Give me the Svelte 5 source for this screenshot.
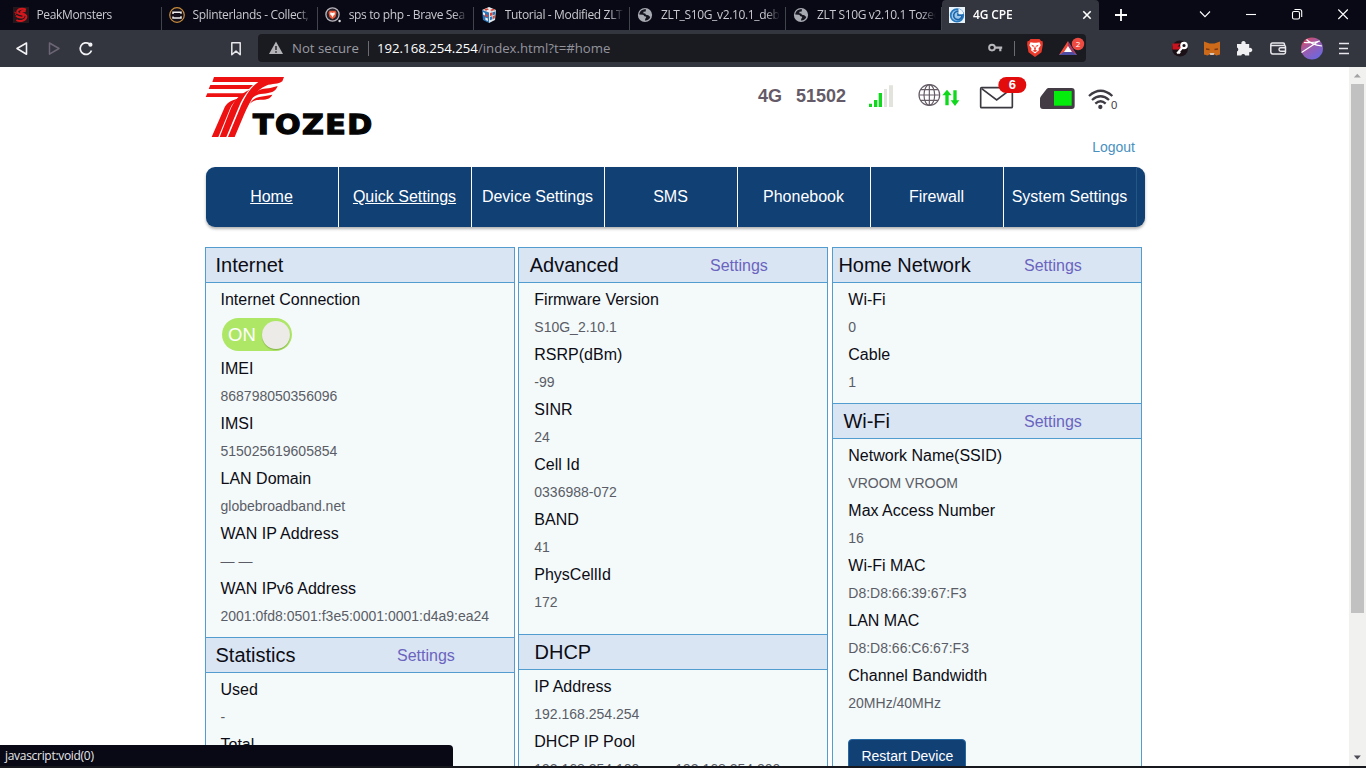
<script lang="ts">
  interface Tab {
    title: string;
    icon: string;
    active?: boolean;
  }

  interface Item {
    label: string;
    value?: string;
    toggle?: boolean;
  }

  interface Panel {
    title: string;
    indent: number;
    settings?: boolean;
    bottom: number;
    items: Item[];
    restart?: boolean;
  }

  const tabs: Tab[] = [
    { title: 'PeakMonsters', icon: 'peak' },
    { title: 'Splinterlands - Collect,', icon: 'splinter' },
    { title: 'sps to php - Brave Sea', icon: 'search' },
    { title: 'Tutorial - Modified ZLT', icon: 'cube' },
    { title: 'ZLT_S10G_v2.10.1_deb', icon: 'world' },
    { title: 'ZLT S10G v2.10.1 Tozed', icon: 'world' },
    { title: '4G CPE', icon: 'cpe', active: true }
  ];

  const nav = ['Home', 'Quick Settings', 'Device Settings', 'SMS', 'Phonebook', 'Firewall', 'System Settings'];

  const columns: Panel[][] = [
    [
      {
        title: 'Internet', indent: 9.5, bottom: 7,
        items: [
          { label: 'Internet Connection', toggle: true },
          { label: 'IMEI', value: '868798050356096' },
          { label: 'IMSI', value: '515025619605854' },
          { label: 'LAN Domain', value: 'globebroadband.net' },
          { label: 'WAN IP Address', value: '— —' },
          { label: 'WAN IPv6 Address', value: '2001:0fd8:0501:f3e5:0001:0001:d4a9:ea24' }
        ]
      },
      {
        title: 'Statistics', indent: 9.5, settings: true, bottom: 8,
        items: [
          { label: 'Used', value: '-' },
          { label: 'Total', value: '-' }
        ]
      }
    ],
    [
      {
        title: 'Advanced', indent: 10.7, settings: true, bottom: 18,
        items: [
          { label: 'Firmware Version', value: 'S10G_2.10.1' },
          { label: 'RSRP(dBm)', value: '-99' },
          { label: 'SINR', value: '24' },
          { label: 'Cell Id', value: '0336988-072' },
          { label: 'BAND', value: '41' },
          { label: 'PhysCellId', value: '172' }
        ]
      },
      {
        title: 'DHCP', indent: 15.5, bottom: 8,
        items: [
          { label: 'IP Address', value: '192.168.254.254' },
          { label: 'DHCP IP Pool', value: '192.168.254.100 —— 192.168.254.200' }
        ]
      }
    ],
    [
      {
        title: 'Home Network', indent: 5.4, settings: true, bottom: 7,
        items: [
          { label: 'Wi-Fi', value: '0' },
          { label: 'Cable', value: '1' }
        ]
      },
      {
        title: 'Wi-Fi', indent: 10.4, settings: true, bottom: 8, restart: true,
        items: [
          { label: 'Network Name(SSID)', value: 'VROOM VROOM' },
          { label: 'Max Access Number', value: '16' },
          { label: 'Wi-Fi MAC', value: 'D8:D8:66:39:67:F3' },
          { label: 'LAN MAC', value: 'D8:D8:66:C6:67:F3' },
          { label: 'Channel Bandwidth', value: '20MHz/40MHz' }
        ]
      }
    ]
  ];
</script>

{#snippet favicon(name: string)}
  <svg class="favicon" viewBox="0 0 16 16" width="16" height="16">
    {#if name === 'peak'}
      <rect width="16" height="16" fill="#25171c" />
      <path d="M13 2.6C9 .8 4.5 2 4.2 5c-.2 2.4 6.8 2 6.5 4.2C10.4 11.6 5 10.5 3 8.6M3.4 13c3.5 2.2 9.3.7 10-3 .4-3-4.8-3.2-5.4-4.8C7.7 4 10.5 3.6 12.6 4.5" fill="none" stroke="#d3181d" stroke-width="1.9" />
      <path d="M1 5l3 1-2 1 2 2" fill="none" stroke="#a81519" />
    {:else if name === 'splinter'}
      <circle cx="8" cy="8" r="7.3" fill="#11101a" stroke="#c98c3c" stroke-width="1.2" />
      <path d="M4 7V5.2h8v1.5M12 9.3V11H4V9.5" fill="none" stroke="#eee" stroke-width="1.5" />
    {:else if name === 'search'}
      <circle cx="7.5" cy="7.5" r="6.6" fill="#26222b" stroke="#b9b5bd" stroke-width="1.3" />
      <path d="M4.5 3.7h6l1 2-1 4.2-3 2.3-3-2.3-1-4.2z" fill="#e8583a" />
      <path d="M5.5 5.2l2 .7 2-.7.4 2-1.4 1.2-1 2-1-2-1.4-1.2z" fill="#fff" />
      <circle cx="14.6" cy="14" r="1.2" fill="#ddd" />
    {:else if name === 'cube'}
      <path d="M1 3l7 2v11l-6-3z" fill="#2c76b8" />
      <path d="M8 5l7-2-1 10-6 3z" fill="#dfe6ec" />
      <path d="M1 3l7-3 7 3-7 2.4z" fill="#eceff2" />
      <path d="M3 2.8l3-1.5 2 1-3 1.5zM9 3l3-1.2 2 1-3.2 1.2zM9 6l2.6-.8v3L9 9zM12 9l2-.8-.3 3-1.9.8zM4 7l2.5 1v2.3L4 9.4z" fill="#d94235" />
      <path d="M11.7 5.2l2.6-.8-.2 3-2.4.8zM9 10l2.4-.8v3L9 13.3z" fill="#2c76b8" />
      <path d="M2 5l2 1v2.5L2 7.6zM4.3 10.5l2.6 1v2.4l-2.4-1z" fill="#eef4f8" />
    {:else if name === 'world'}
      <circle cx="8" cy="8" r="7.1" fill="#a9abb3" />
      <path d="M9 2.2C5 2 2.5 4.3 2.2 7.5l3.4.2c1.8 0 1 1.8 2.8 1.9 1.3.1.8 1.5 0 1.8l-.5 2c2.4.3 4.6-1.2 5.4-3.4l-2-1.8-2.4-.4-.7-1.3-1.9-.3.2-1.4 2.2-.2.1-1.1z" fill="#15151f" />
    {:else}
      <rect width="16" height="16" fill="#e8f2fa" />
      <circle cx="8" cy="8.4" r="6.3" fill="#9cc6e8" stroke="#2678bc" stroke-width="1.7" />
      <path d="M12.6 5.5C10 3 5.5 4 4.7 7.7c-.6 3.5 2.5 5.7 5.5 4.7 2-.7 3-2.5 2.8-4.2H9V5.5" fill="none" stroke="#1c65aa" stroke-width="1.6" />
      <path d="M9.5 1.8a6.4 6.4 0 0 1 5 5.2h-5z" fill="#eef7ff" />
    {/if}
  </svg>
{/snippet}

<div class="browser">
  <header class="tabstrip">
    {#each tabs as tab}
      <div class="tab" class:active={tab.active}>
        {@render favicon(tab.icon)}
        <span class="tab-title">{tab.title}</span>
        {#if tab.active}
          <svg class="tab-close" viewBox="0 0 10 10" width="10" height="10"><path d="M1.3 1.3l7.4 7.4M8.7 1.3L1.3 8.7" stroke="#fff" stroke-width="1.6" /></svg>
        {/if}
      </div>
    {/each}
    <svg class="new-tab" viewBox="0 0 44 30" width="44" height="30"><path d="M22 9v12M16 15h12" stroke="#fff" stroke-width="1.8" /></svg>
    <div class="window-controls">
      <svg viewBox="0 0 46 30"><path d="M18 11.5l5 5.2 5-5.2" /></svg>
      <svg viewBox="0 0 46 30"><path d="M18 14.5h10" /></svg>
      <svg viewBox="0 0 46 30"><rect x="18.5" y="11.5" width="7" height="7.5" rx="1.5" /><path d="M20.5 9.5h5.2a2 2 0 0 1 2 2V17" /></svg>
      <svg viewBox="0 0 46 30"><path d="M18.3 9.5l9.5 9.5M27.8 9.5l-9.5 9.5" /></svg>
    </div>
  </header>

  <div class="toolbar">
    <svg class="tool" viewBox="0 0 32 32"><path d="M20.5 10v11.2L11 15.5z" fill="none" stroke="#f2f2f4" stroke-width="1.6" stroke-linejoin="round" /></svg>
    <svg class="tool" viewBox="0 0 32 32"><path d="M11.5 10v11.2L21 15.5z" fill="none" stroke="#6c6674" stroke-width="1.5" stroke-linejoin="round" /></svg>
    <svg class="tool" viewBox="0 0 32 32"><path d="M19.5 11A5.8 5.8 0 1 0 21.5 17.5" fill="none" stroke="#f2f2f4" stroke-width="1.7" /><circle cx="20.4" cy="11.7" r="2.1" fill="#f2f2f4" /></svg>
    <svg class="tool bookmark" viewBox="0 0 32 32"><path d="M11.8 9.7h8.4v12L16 18.1l-4.2 3.6z" fill="none" stroke="#e8e8ec" stroke-width="1.5" stroke-linejoin="round" /></svg>

    <div class="address">
      <svg width="16" height="16" viewBox="0 0 16 16"><path d="M8 1.5L15 14H1z" fill="#b4b4b8" /><path d="M8 6v4M8 11.2v1.5" stroke="#25262c" stroke-width="1.5" /></svg>
      <span class="insecure">Not secure</span>
      <span class="divider"></span>
      <span class="url">192.168.254.254<span>/index.html?t=#home</span></span>
      <div class="address-icons">
        <svg width="16" height="16" viewBox="0 0 16 16"><circle cx="4" cy="7.6" r="2.9" fill="none" stroke="#b8b8bc" stroke-width="1.9" /><path d="M6.8 7.6h7.4M12.3 7.6v3.6" fill="none" stroke="#b8b8bc" stroke-width="2.2" /></svg>
        <span class="divider"></span>
        <svg width="18" height="20" viewBox="0 0 18 20">
          <path d="M4.5 1h9L15 3l1.6.2.3 3-1.4 8L9 19l-6.5-4.8-1.4-8 .3-3L3 3z" fill="#ea3a2b" />
          <path d="M4.5 4.2l3 .6h3l3-.6 1.2 3-2.3 3.6.6 1.4L9 15.6 5 12.2l.6-1.4-2.3-3.6z" fill="#fff" />
          <path d="M5.2 6.8l2.6.8-.4 1.8zM12.8 6.8l-2.6.8.4 1.8zM9 7.6l1 3.4-1 1.6L8 11zM6.5 12.7l2.5-1 2.5 1L9 14z" fill="#ea3a2b" />
        </svg>
        <svg class="rewards" width="28" height="22" viewBox="0 0 28 22">
          <path d="M10 5.2L1.5 18h17z" fill="#fff" />
          <path d="M10 4L1 18l4.5-2.2L10 9z" fill="#ef4a38" />
          <path d="M10 4l9 14-4.5-2.2L10 9z" fill="#a43961" />
          <path d="M1 18l4.5-3h9L19 18z" fill="#4c4ca2" />
          <circle cx="20" cy="7" r="6.2" fill="#ed4b41" />
          <text x="20" y="10" text-anchor="middle" fill="#fff" font-size="8">2</text>
        </svg>
      </div>
    </div>

    <div class="extensions">
      <svg class="tool" viewBox="0 0 32 32">
        <circle cx="16" cy="15.5" r="8" fill="#1b1016" />
        <path d="M8.5 10.5h8l-3 3h5l-3 3H8.5z" fill="#c9141f" />
        <circle cx="20" cy="12.5" r="2.7" fill="none" stroke="#fff" stroke-width="2.2" />
        <path d="M18.2 14.7l-5 5.8M14.6 18.8l1.5 1.4" stroke="#fff" stroke-width="2.2" />
      </svg>
      <svg class="tool" viewBox="0 0 32 32">
        <path d="M8 8.5l5.5 2h5L24 8.5v13l-3.5 1-2-1h-5l-2 1L8 21.5z" fill="#cd6a19" />
        <path d="M10 16l3.5.5M22 16l-3.5.5" stroke="#7c3914" stroke-width="1.3" />
        <path d="M13.5 20h5l-.8 2h-3.4z" fill="#d9c6ba" />
      </svg>
      <svg class="tool" viewBox="0 0 32 32"><path d="M9 11h4.5a2.2 2.2 0 1 1 4 0h3.7v4a2.2 2.2 0 1 1 0 4v3.4h-4a2.2 2.2 0 0 0-4 0H9v-4a2.2 2.2 0 0 0 0-4z" fill="#f0f0f2" /></svg>
      <svg class="tool wide" viewBox="0 0 34 32"><path d="M24.5 12.5v-1.2c0-.8-.5-1.3-1.3-1.3H12.5c-1.1 0-1.7.7-1.7 1.7V19c0 1.2.7 1.9 1.9 1.9h11.2c1 0 1.6-.6 1.6-1.6v-5.5c0-.8-.5-1.3-1.3-1.3H11.5" fill="none" stroke="#e8e8ec" stroke-width="1.5" /><path d="M25.5 14.8h-4.8a1.7 1.7 0 0 0 0 3.4h4.8" fill="none" stroke="#e8e8ec" stroke-width="1.4" /></svg>
      <svg class="tool wide" viewBox="0 0 34 32">
        <defs>
          <linearGradient id="avatar" x1="0" y1="0" x2=".7" y2="1">
            <stop offset="0" stop-color="#e8474b" />
            <stop offset=".45" stop-color="#a05aa8" />
            <stop offset="1" stop-color="#6b68e0" />
          </linearGradient>
        </defs>
        <circle cx="18" cy="15.5" r="11" fill="url(#avatar)" />
        <path d="M7.5 19.5L25 8M12.5 6.5c3 3.5 7 5.5 15.5 6.5M10 9.5c6 .5 10 .5 16-1.5" fill="none" stroke="#fff" stroke-width="1.2" />
      </svg>
      <svg class="tool" viewBox="0 0 32 32"><path d="M11 10.5h10M11 15.5h9M11 20.5h10" stroke="#e8e8ec" stroke-width="1.5" /></svg>
    </div>
  </div>

  <div class="viewport">
    <main class="page">
      <div class="top">
        <svg class="logo" viewBox="30 0 540 216" width="180" height="72">
          <g fill="#ee1111">
            <path d="M57 27H267L262 40C250 50 232 46 213 53C180 66 163 105 147 140L119 207H99L133 125C150 85 165 60 190 42H52z" />
            <path d="M46 51H174L162 63H41z" />
            <path d="M37 76H150L140 87H32z" />
            <path d="M163 65C132 80 118 98 108 120L74 207H94L126 130C138 100 146 84 163 65z" />
            <path d="M132 91C103 98 94 107 87 122L50 207H70L105 122C112 108 120 98 132 91z" />
            <path d="M248 54C242 73 225 75 205 77C190 78 181 82 170 90C181 65 205 61 226 60z" />
            <path d="M232 80C226 94 210 95 195 95C181 96 173 98 165 107C174 89 192 86 211 84z" />
          </g>
          <g class="wordmark" transform="translate(174 197) scale(1.1 1)">
            <text textLength="325" lengthAdjust="spacing">TOZED</text>
          </g>
        </svg>

        <div class="status">
          <div class="status-row">
            <span class="network">4G</span>
            <span class="operator">51502</span>
            <svg viewBox="381 21 150 105" width="50" height="35">
              <path d="M387 107h9v10h-9zM402 96h10v21h-10zM416 75h10v42h-10z" fill="#10d81c" />
              <path d="M432 63h9v54h-9zM447 52h12v65h-12z" fill="#e3e3dd" />
            </svg>
            <svg viewBox="531 21 183 105" width="61" height="35">
              <g fill="none" stroke="#655c66" stroke-width="3.5">
                <circle cx="568" cy="81" r="31" />
                <ellipse cx="568" cy="81" rx="16" ry="31" />
                <path d="M568 50v62M537 81h62M542 65h52M542 97h52" />
              </g>
              <path d="M616 112V82h-9l14-17 14 17h-9v30zM640 67h10v30h8l-13 17-13-17h8z" fill="#10d81c" />
            </svg>
            <svg viewBox="714 21 180 105" width="60" height="35">
              <rect x="722" y="59" width="95" height="60" rx="3" fill="#fff" stroke="#3b3840" stroke-width="5" />
              <path d="M725 62l45 34 45-34" fill="none" stroke="#3b3840" stroke-width="5" />
              <rect x="775" y="27" width="84" height="48" rx="24" fill="#e20c0c" />
              <text class="badge" x="817" y="63" text-anchor="middle">6</text>
            </svg>
            <svg viewBox="894 21 144 105" width="48" height="35">
              <path d="M925 60h70q9 0 9 9v45q0 9-9 9h-86q-9 0-9-9V92q0-5 4-9l14-18q3-5 7-5z" fill="#443c45" />
              <path d="M942 69h53v44h-53z" fill="#04ec0c" />
            </svg>
            <svg viewBox="1038 21 102 105" width="34" height="35">
              <g fill="none" stroke="#3f3b43" stroke-width="7">
                <path d="M1047 84q35-31 70 0M1056 96q26-23 51 0M1066 107q16-14 31 0" />
              </g>
              <circle cx="1081" cy="117" r="6.5" fill="#3f3b43" />
              <text class="clients" x="1113" y="123">0</text>
            </svg>
          </div>
          <a class="logout" href="#logout">Logout</a>
        </div>
      </div>

      <nav>
        {#each nav as name, i}
          <a href="#{i}" class:underlined={i < 2}>{name}</a>
        {/each}
      </nav>

      <div class="columns">
        {#each columns as column}
          <div class="column">
            {#each column as panel}
              <section>
                <h2>
                  <span style:padding-left="{panel.indent}px">{panel.title}</span>
                  {#if panel.settings}<a href="#settings">Settings</a>{/if}
                </h2>
                <div class="body" style:padding-bottom="{panel.bottom}px">
                  {#each panel.items as item}
                    <div class="label">{item.label}</div>
                    {#if item.toggle}
                      <div class="toggle-row">
                        <div class="toggle"><span>ON</span><i></i></div>
                      </div>
                    {:else}
                      <div class="value">{item.value}</div>
                    {/if}
                  {/each}
                  {#if panel.restart}
                    <button>Restart Device</button>
                  {/if}
                </div>
              </section>
            {/each}
          </div>
        {/each}
      </div>
    </main>

    <div class="scrollbar">
      <svg width="17" height="17" viewBox="0 0 17 17"><path d="M4.8 10.5h7L8.3 6.8z" fill="#a3a3a3" /></svg>
      <div class="thumb"></div>
      <svg width="17" height="17" viewBox="0 0 17 17"><path d="M4.8 6.5h7l-3.5 4z" fill="#4b4a55" /></svg>
    </div>
  </div>

  <div class="link-status">javascript:void(0)</div>
</div>

<style>
  .browser {
    position: relative;
    display: flex;
    flex-direction: column;
    box-sizing: border-box;
    width: 1366px;
    height: 768px;
    overflow: hidden;
    border-bottom: 2px solid #17181d;
    background: #fff;
    font-family: "Liberation Sans", Arial, sans-serif;
  }

  svg {
    display: block;
    flex: none;
  }

  a {
    color: inherit;
    text-decoration: none;
  }

  .tabstrip {
    display: flex;
    flex: none;
    height: 30px;
    padding-left: 5.5px;
    background: #080914;
    color: #c9c9cf;
    font: 12px "Open Sans", "Noto Sans", sans-serif;
  }

  .tab {
    display: flex;
    flex: none;
    align-items: center;
    box-sizing: border-box;
    width: 156.1px;
    padding: 0 6px 0 7px;
    background: linear-gradient(#41434d, #41434d) right bottom / 1px 23px no-repeat;
  }

  .tab.active {
    width: 157px;
    padding-right: 7px;
    border-radius: 4px 4px 0 0;
    background: #33353f;
    color: #fff;
    font-weight: 600;
  }

  .tab-title {
    flex: 1;
    min-width: 0;
    margin: 0 0 1px 8px;
    overflow: hidden;
    white-space: nowrap;
    letter-spacing: -0.35px;
    mask-image: linear-gradient(to right, #000 88%, transparent);
  }

  .active .tab-title {
    letter-spacing: -0.15px;
  }

  .window-controls {
    display: flex;
    margin-left: auto;
  }

  .window-controls svg {
    width: 46px;
    height: 30px;
    fill: none;
    stroke: #fff;
    stroke-width: 1.1;
  }

  .toolbar {
    display: flex;
    flex: none;
    align-items: center;
    height: 37px;
    padding: 0 6px;
    background: #33353f;
    font-family: "Open Sans", "Noto Sans", sans-serif;
  }

  .tool {
    width: 32px;
    height: 32px;
  }

  .tool.wide {
    width: 34px;
  }

  .bookmark {
    margin-left: 118px;
  }

  .address {
    display: flex;
    align-items: center;
    box-sizing: border-box;
    width: 828px;
    height: 28px;
    margin: 0 0 1px 6px;
    padding-left: 10px;
    border-radius: 4px;
    background: #1a1b21;
    font-size: 13.2px;
    white-space: nowrap;
  }

  .insecure {
    width: 76px;
    margin-left: 8px;
    color: #9a9ba2;
  }

  .divider {
    width: 1px;
    height: 15px;
    background: #6d6a72;
  }

  .url {
    margin-left: 8px;
    color: #fff;
  }

  .url span {
    color: #94949c;
  }

  .address-icons {
    display: flex;
    align-items: center;
    gap: 10.5px;
    margin-left: auto;
  }

  .rewards {
    margin-left: 4px;
  }

  .extensions {
    display: flex;
    margin-left: 78px;
  }

  .viewport {
    display: flex;
    flex: 1;
    min-height: 0;
    overflow: hidden;
  }

  .page {
    box-sizing: border-box;
    width: 1349px;
    padding: 0 204px 0 205px;
  }

  .top {
    display: flex;
    justify-content: space-between;
    height: 100px;
  }

  .logo {
    margin-top: 1px;
  }

  .wordmark text {
    fill: #050505;
    stroke: #050505;
    stroke-width: 4;
    font: bold 82px "DejaVu Sans", sans-serif;
  }

  .status {
    display: flex;
    flex-direction: column;
    align-items: flex-end;
    padding: 8px 10px 0 0;
  }

  .status-row {
    display: flex;
    height: 35px;
    margin-right: 15px;
    color: #655a68;
    font-size: 18px;
    font-weight: bold;
    line-height: 42px;
  }

  .operator {
    width: 71px;
    margin-left: 14px;
  }

  .badge {
    fill: #fff;
    font-size: 39px;
    font-weight: bold;
  }

  .clients {
    fill: #3f3b43;
    font-size: 34px;
    font-weight: normal;
  }

  .logout {
    margin-top: 29px;
    color: #4a90bf;
    font-size: 14px;
    line-height: 16px;
  }

  nav {
    display: flex;
    width: 939px;
    height: 60px;
    margin-left: 1px;
    border-radius: 9px;
    overflow: hidden;
    background: #114075;
    box-shadow: 0 2px 3px rgba(0, 0, 0, 0.3);
    color: #fff;
    font-size: 16px;
    line-height: 59px;
    text-align: center;
  }

  nav a {
    box-sizing: border-box;
    width: 133px;
    padding-right: 1px;
    border-right: 1px solid #fff;
  }

  nav a:last-child {
    border-right-color: #285588;
  }

  nav .underlined {
    text-decoration: underline;
  }

  .columns {
    display: grid;
    grid-template-columns: 313px 314px 310px;
    align-items: start;
    margin-top: 20px;
  }

  .column {
    width: 310px;
  }

  section {
    border: 1px solid #529ccf;
    border-bottom: 0;
    background: #f4f9fa;
  }

  h2 {
    display: grid;
    grid-template-columns: 191px 1fr;
    height: 34px;
    margin: 0;
    border-bottom: 1px solid #529ccf;
    background: #dae5f3;
    color: #0c0c14;
    font-size: 20px;
    font-weight: normal;
    line-height: 34px;
    white-space: nowrap;
  }

  h2 a {
    color: #6a64bf;
    font-size: 16px;
    line-height: 35px;
  }

  .body {
    padding: 3px 14px 0 14.5px;
  }

  .column + .column .body {
    padding-left: 15.3px;
  }

  .label {
    height: 28px;
    color: #0c0c14;
    font-size: 16px;
    line-height: 28px;
  }

  .value {
    height: 27px;
    color: #5a5d66;
    font-size: 14px;
    line-height: 26px;
    white-space: pre;
  }

  .toggle-row {
    box-sizing: border-box;
    height: 41px;
    padding: 4px 0 0 1.5px;
  }

  .toggle {
    display: flex;
    align-items: center;
    justify-content: space-between;
    box-sizing: border-box;
    width: 70px;
    height: 33px;
    padding: 0 2px 0 6px;
    border-radius: 17px;
    background: #aee765;
    color: #fff;
    font-size: 18.5px;
  }

  .toggle i {
    width: 28px;
    height: 28px;
    border-radius: 50%;
    background: #ecebe7;
    box-shadow: 0 1px 1px rgba(60, 90, 30, 0.35);
  }

  button {
    display: block;
    width: 118px;
    height: 34px;
    margin: 22px 0 0;
    padding: 0;
    border: 1px solid #2467a3;
    border-radius: 4px;
    background: #114075;
    color: #fff;
    font: 14px "Liberation Sans", Arial, sans-serif;
  }

  .scrollbar {
    display: flex;
    flex-direction: column;
    width: 17px;
    background: #f1f1f0;
  }

  .thumb {
    flex: none;
    width: 13px;
    height: 529px;
    margin: 0 2px auto;
    background: #c1c1c1;
  }

  /* Hovered link address, floats above the page */
  .link-status {
    position: absolute;
    left: 0;
    bottom: -2px;
    box-sizing: border-box;
    width: 453px;
    height: 23px;
    padding-left: 5px;
    border-radius: 0 4px 0 0;
    background: #080914;
    color: #e6e6ea;
    font: 12px/22px "Open Sans", "Noto Sans", sans-serif;
    letter-spacing: -0.3px;
  }
</style>
